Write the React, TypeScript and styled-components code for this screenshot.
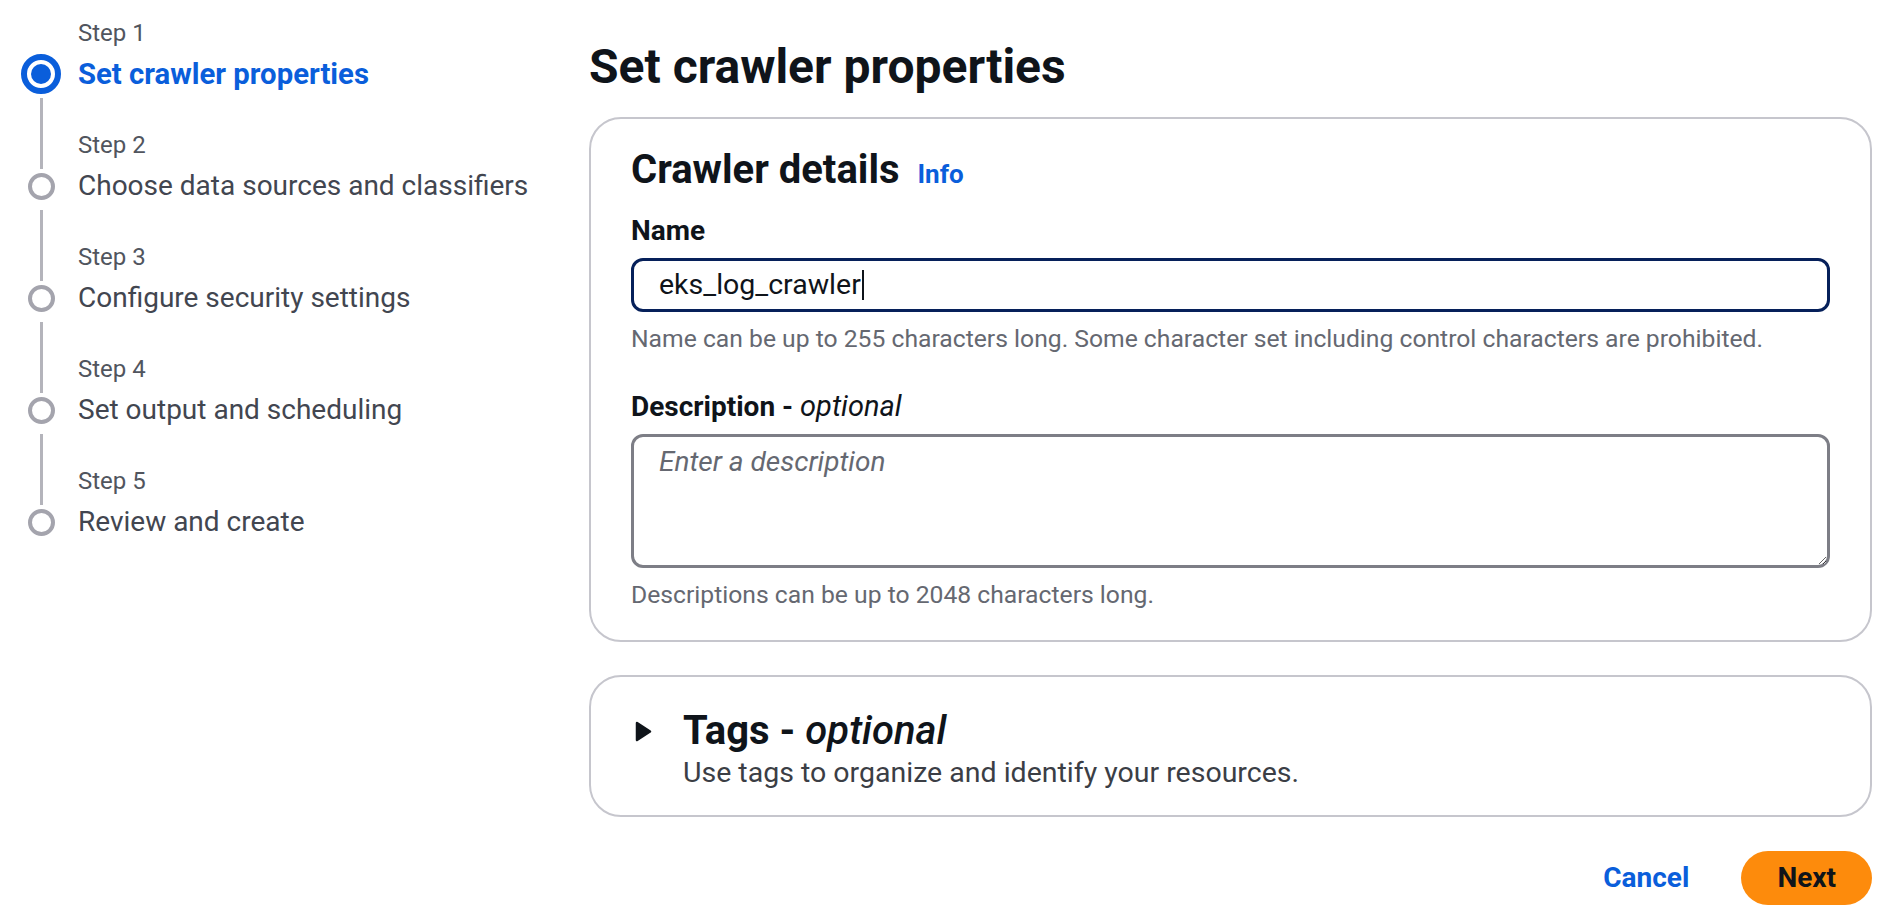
import React from "react";
import styled, { createGlobalStyle } from "styled-components";

const GlobalStyle = createGlobalStyle`
  html, body {
    margin: 0;
    padding: 0;
    background: #ffffff;
  }
  body {
    font-family: Roboto, "Open Sans", Arial, sans-serif;
    color: #0f141a;
    -webkit-font-smoothing: antialiased;
  }
  * {
    box-sizing: border-box;
  }
`;

const steps = [
  "Set crawler properties",
  "Choose data sources and classifiers",
  "Configure security settings",
  "Set output and scheduling",
  "Review and create",
];

const BLUE = "#0a5edb";

function App() {
  return (
    <Page>
      <GlobalStyle />
      <Sidebar>
        {steps.map((title, i) => {
          const active = i === 0;
          const first = i === 0;
          const last = i === steps.length - 1;
          return (
            <Step key={title}>
              <Rail>
                <RailLine $hidden={first} $top $active={active} />
                {active ? (
                  <ActiveCircle>
                    <ActiveDot />
                  </ActiveCircle>
                ) : (
                  <IdleCircle />
                )}
                <RailLine $hidden={last} />
              </Rail>
              <StepText $last={last}>
                <StepLabel>Step {i + 1}</StepLabel>
                <StepTitle $active={active}>{title}</StepTitle>
              </StepText>
            </Step>
          );
        })}
      </Sidebar>

      <Main>
        <PageTitle>Set crawler properties</PageTitle>

        <Card>
          <CardHeader>
            Crawler details
            <InfoLink>Info</InfoLink>
          </CardHeader>

          <Field $first>
            <FieldLabel>Name</FieldLabel>
            <InputShell>
              <InputValue>eks_log_crawler</InputValue>
              <Caret />
            </InputShell>
            <Hint>
              Name can be up to 255 characters long. Some character set
              including control characters are prohibited.
            </Hint>
          </Field>

          <Field>
            <FieldLabel>
              Description - <Optional>optional</Optional>
            </FieldLabel>
            <TextArea placeholder="Enter a description" />
            <Hint>Descriptions can be up to 2048 characters long.</Hint>
          </Field>
        </Card>

        <TagsCard>
          <TagsHeader>
            <ExpandIcon>
              <svg width="17" height="21" viewBox="0 0 17 21">
                <path
                  d="M2 2 L15 10.5 L2 19 Z"
                  fill="#0f141a"
                  stroke="#0f141a"
                  strokeWidth="2.5"
                  strokeLinejoin="round"
                />
              </svg>
            </ExpandIcon>
            <TagsTitle>
              Tags - <TagsOptional>optional</TagsOptional>
            </TagsTitle>
          </TagsHeader>
          <TagsDescription>
            Use tags to organize and identify your resources.
          </TagsDescription>
        </TagsCard>

        <Actions>
          <LinkButton>Cancel</LinkButton>
          <PrimaryButton>Next</PrimaryButton>
        </Actions>
      </Main>
    </Page>
  );
}

const Page = styled.div`
  display: flex;
  width: 100%;
  min-height: 916px;
`;

const Sidebar = styled.nav`
  flex: none;
  width: 588px;
  padding: 18px 0 0 21px;
  display: flex;
  flex-direction: column;
`;

const Step = styled.div`
  display: flex;
  column-gap: 17px;
`;

const Rail = styled.div`
  flex: none;
  width: 40px;
  display: flex;
  flex-direction: column;
  align-items: center;
`;

const RailLine = styled.div<{ $hidden?: boolean; $top?: boolean; $active?: boolean }>`
  width: 3px;
  background: #b4b4bb;
  visibility: ${(p) => (p.$hidden ? "hidden" : "visible")};
  ${(p) =>
    p.$top
      ? `height: ${p.$active ? 32 : 38.5}px; margin-bottom: 4px; flex: none;`
      : `flex: 1; margin-top: 4px;`}
`;

const ActiveCircle = styled.div`
  flex: none;
  width: 40px;
  height: 40px;
  border-radius: 50%;
  border: 6px solid ${BLUE};
  display: flex;
  align-items: center;
  justify-content: center;
`;

const ActiveDot = styled.div`
  width: 20px;
  height: 20px;
  border-radius: 50%;
  background: ${BLUE};
`;

const IdleCircle = styled.div`
  flex: none;
  width: 27px;
  height: 27px;
  margin: 0 0 6.5px;
  border-radius: 50%;
  border: 4px solid #a4a4ad;
`;

const StepText = styled.div<{ $last?: boolean }>`
  display: flex;
  flex-direction: column;
  padding-bottom: ${(p) => (p.$last ? 0 : 36)}px;
`;

const StepLabel = styled.div`
  font-size: 24px;
  line-height: 30px;
  color: #51555e;
`;

const StepTitle = styled.div<{ $active?: boolean }>`
  margin-top: 6px;
  min-height: 40px;
  display: flex;
  align-items: center;
  font-size: ${(p) => (p.$active ? 29.3 : 28)}px;
  line-height: 34px;
  font-weight: ${(p) => (p.$active ? 700 : 400)};
  color: ${(p) => (p.$active ? BLUE : "#424650")};
`;

const Main = styled.main`
  flex: 1;
  min-width: 0;
  padding: 39px 22px 0 1px;
`;

const PageTitle = styled.h1`
  margin: 0 0 22px;
  font-size: 48px;
  line-height: 56px;
  font-weight: 700;
  color: #0f141a;
`;

const Card = styled.section`
  border: 2px solid #c6c6cd;
  border-radius: 32px;
  padding: 27px 40px 29px;
  background: #ffffff;
`;

const CardHeader = styled.h2`
  margin: 0;
  display: flex;
  align-items: baseline;
  font-size: 40px;
  line-height: 48px;
  font-weight: 700;
`;

const InfoLink = styled.a`
  margin-left: 18px;
  font-size: 26px;
  font-weight: 700;
  color: ${BLUE};
  cursor: pointer;
`;

const Field = styled.div<{ $first?: boolean }>`
  display: flex;
  flex-direction: column;
  margin-top: ${(p) => (p.$first ? 15 : 33)}px;
`;

const FieldLabel = styled.label`
  font-size: 28px;
  line-height: 36px;
  font-weight: 700;
  margin-bottom: 9px;
`;

const Optional = styled.i`
  font-weight: 400;
  font-size: 29px;
`;

const InputShell = styled.div`
  height: 54px;
  border: 3px solid #06205a;
  border-radius: 12px;
  padding: 0 25px;
  display: flex;
  align-items: center;
  font-size: 28.5px;
  line-height: 36px;
`;

const InputValue = styled.span`
  color: #0f141a;
`;

const Caret = styled.span`
  width: 2px;
  height: 30px;
  margin-left: 1px;
  background: #0f141a;
`;

const TextArea = styled.textarea`
  height: 134px;
  width: 100%;
  border: 3px solid #7d7e86;
  border-radius: 12px;
  padding: 5px 25px;
  font-family: inherit;
  font-size: 28px;
  line-height: 40px;
  color: #0f141a;
  resize: vertical;
  outline: none;

  &::placeholder {
    color: #656871;
    font-style: italic;
  }
`;

const Hint = styled.div`
  margin-top: 11px;
  font-size: 24.7px;
  line-height: 32px;
  color: #656871;
`;

const TagsCard = styled.section`
  margin-top: 33px;
  border: 2px solid #c6c6cd;
  border-radius: 32px;
  padding: 30px 40px 24px;
`;

const TagsHeader = styled.div`
  display: flex;
  align-items: center;
  column-gap: 20px;
`;

const ExpandIcon = styled.span`
  flex: none;
  width: 32px;
  height: 21px;
  display: flex;
  padding-left: 4px;
`;

const TagsTitle = styled.h2`
  margin: 0;
  font-size: 40px;
  line-height: 48px;
  font-weight: 700;
`;

const TagsOptional = styled.i`
  font-weight: 500;
`;

const TagsDescription = styled.div`
  margin-left: 52px;
  font-size: 28.5px;
  line-height: 36px;
  color: #3b3e45;
`;

const Actions = styled.div`
  margin-top: 34px;
  display: flex;
  justify-content: flex-end;
  column-gap: 16px;
`;

const ButtonBase = styled.button`
  height: 54px;
  padding: 0 36px;
  border-radius: 27px;
  border: none;
  font-family: inherit;
  font-size: 28px;
  line-height: 36px;
  font-weight: 700;
  cursor: pointer;
`;

const LinkButton = styled(ButtonBase)`
  background: transparent;
  color: ${BLUE};
`;

const PrimaryButton = styled(ButtonBase)`
  background: #fd8b0c;
  color: #0f141a;
`;

export default App;
